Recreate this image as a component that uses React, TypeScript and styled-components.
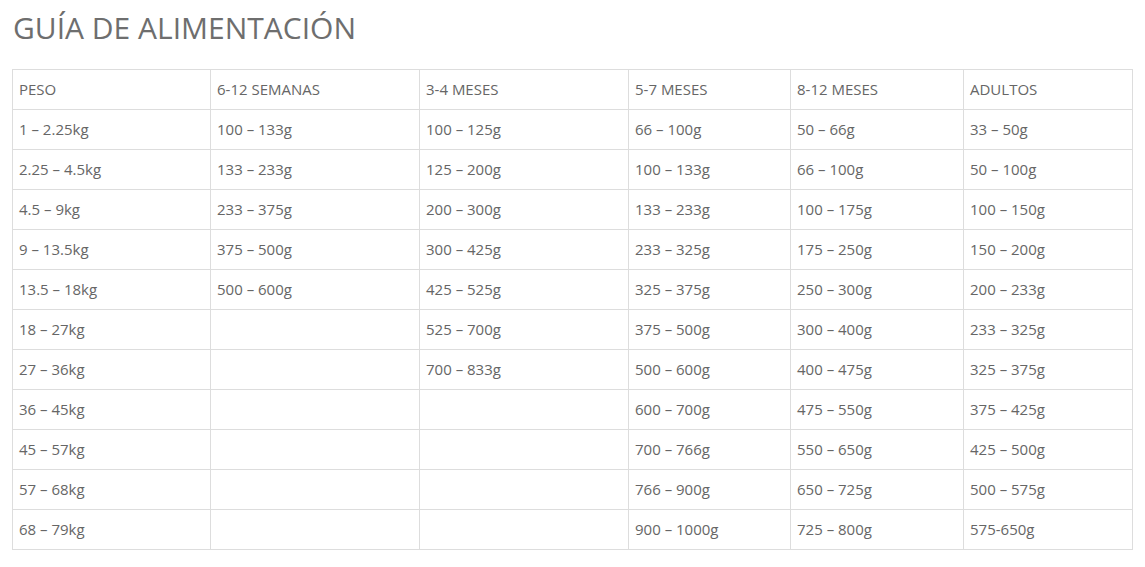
import { createGlobalStyle, styled } from 'styled-components';

const columns = [
  { label: 'PESO', width: 198 },
  { label: '6-12 SEMANAS', width: 209 },
  { label: '3-4 MESES', width: 209 },
  { label: '5-7 MESES', width: 162 },
  { label: '8-12 MESES', width: 173 },
  { label: 'ADULTOS', width: 169 },
];

const rows: string[][] = [
  ['1 – 2.25kg', '100 – 133g', '100 – 125g', '66 – 100g', '50 – 66g', '33 – 50g'],
  ['2.25 – 4.5kg', '133 – 233g', '125 – 200g', '100 – 133g', '66 – 100g', '50 – 100g'],
  ['4.5 – 9kg', '233 – 375g', '200 – 300g', '133 – 233g', '100 – 175g', '100 – 150g'],
  ['9 – 13.5kg', '375 – 500g', '300 – 425g', '233 – 325g', '175 – 250g', '150 – 200g'],
  ['13.5 – 18kg', '500 – 600g', '425 – 525g', '325 – 375g', '250 – 300g', '200 – 233g'],
  ['18 – 27kg', '', '525 – 700g', '375 – 500g', '300 – 400g', '233 – 325g'],
  ['27 – 36kg', '', '700 – 833g', '500 – 600g', '400 – 475g', '325 – 375g'],
  ['36 – 45kg', '', '', '600 – 700g', '475 – 550g', '375 – 425g'],
  ['45 – 57kg', '', '', '700 – 766g', '550 – 650g', '425 – 500g'],
  ['57 – 68kg', '', '', '766 – 900g', '650 – 725g', '500 – 575g'],
  ['68 – 79kg', '', '', '900 – 1000g', '725 – 800g', '575-650g'],
];

const GlobalStyle = createGlobalStyle`
  body {
    margin: 0;
    background: #fff;
    font-family: 'Open Sans', 'Noto Sans', sans-serif;
    color: #666;
  }
`;

const Page = styled.div`
  padding: 0 12px;
`;

const Title = styled.h2`
  margin: 0;
  padding: 8px 0 0 1px;
  height: 69px;
  box-sizing: border-box;
  font-weight: 400;
  font-size: 30px;
  line-height: 40px;
  color: #6e6e6e;
`;

const Table = styled.table`
  border-collapse: collapse;
  table-layout: fixed;
  width: 1121px;
  font-size: 15px;
  color: #666;
`;

const Cell = styled.td`
  border: 1px solid #ddd;
  height: 40px;
  padding: 0 7px 2px 6px;
  box-sizing: border-box;
  vertical-align: middle;
  line-height: 20px;
  text-align: left;
  font-weight: 400;
`;

export default function App() {
  return (
    <>
      <GlobalStyle />
      <Page>
        <Title>GUÍA DE ALIMENTACIÓN</Title>
        <Table>
          <colgroup>
            {columns.map((c) => (
              <col key={c.label} style={{ width: c.width }} />
            ))}
          </colgroup>
          <tbody>
            <tr>
              {columns.map((c) => (
                <Cell key={c.label}>{c.label}</Cell>
              ))}
            </tr>
            {rows.map((r, i) => (
              <tr key={i}>
                {r.map((v, j) => (
                  <Cell key={j}>{v}</Cell>
                ))}
              </tr>
            ))}
          </tbody>
        </Table>
      </Page>
    </>
  );
}
